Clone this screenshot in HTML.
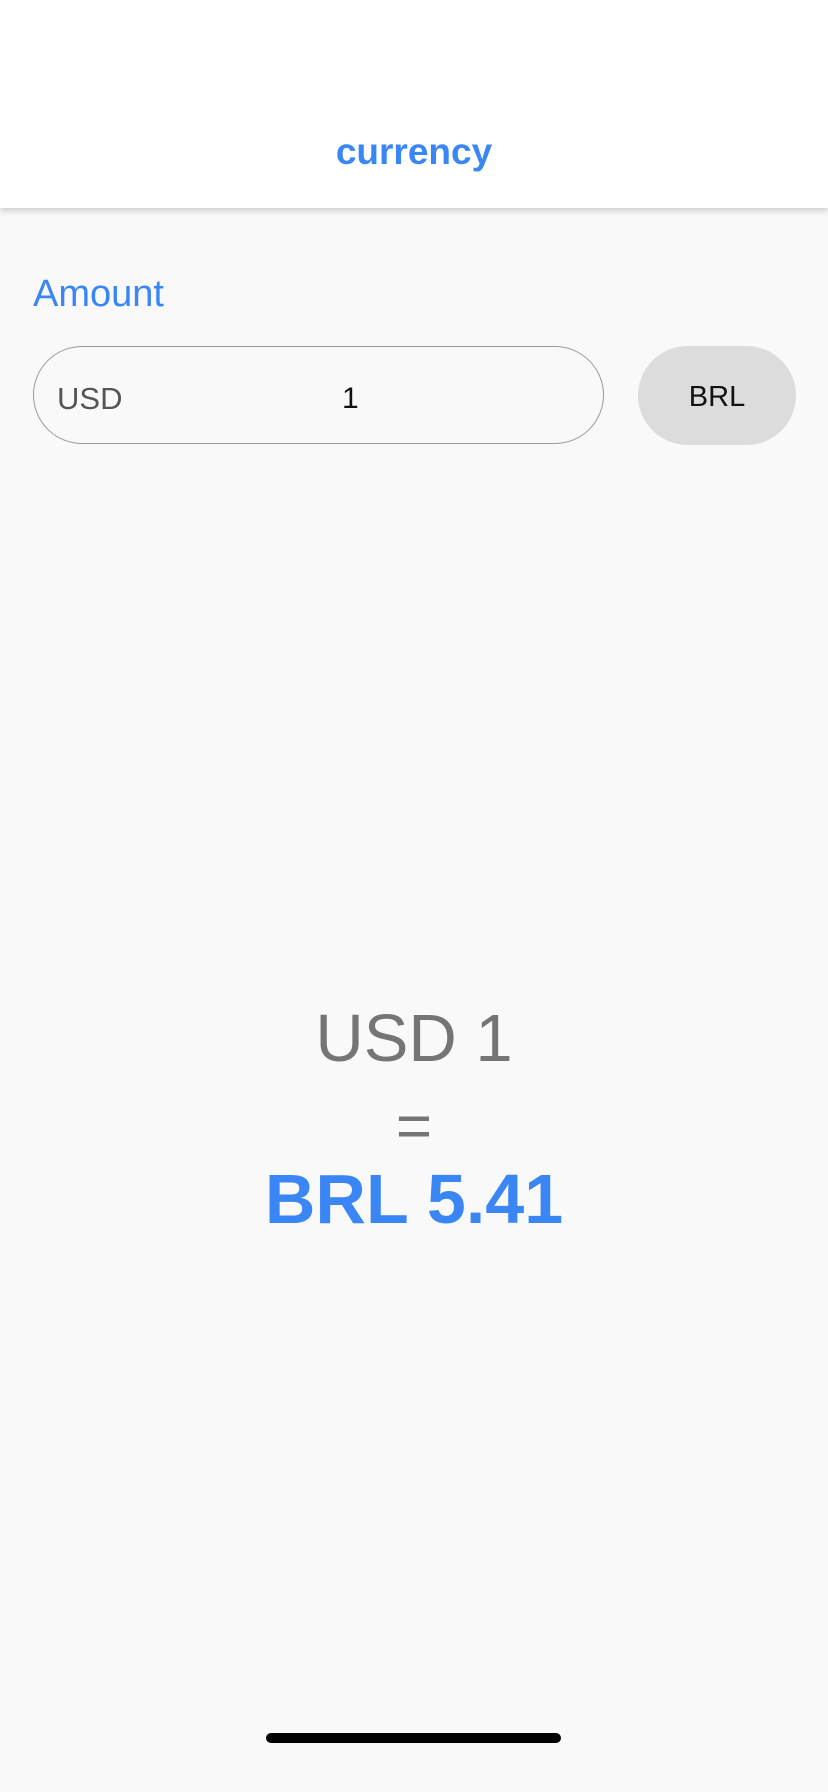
<!DOCTYPE html>
<html><head><meta charset="utf-8"><style>
html,body{margin:0;padding:0;}
body{width:828px;height:1792px;background:#f9f9f9;position:relative;overflow:hidden;font-family:"Liberation Sans",sans-serif;}
.hdr{position:absolute;left:0;top:0;width:828px;height:208px;background:#fff;box-shadow:0 3px 6px rgba(0,0,0,0.18);}
.t{position:absolute;left:0;width:828px;text-align:center;white-space:nowrap;}
.abs{position:absolute;white-space:nowrap;}
</style></head><body>
<div class="hdr"></div>
<div class="t" style="top:130px;font-size:37px;font-weight:bold;color:#3a86f5;line-height:44px;">currency</div>
<div class="abs" style="left:33px;top:271px;font-size:38px;color:#3a86f5;line-height:46px;">Amount</div>
<div class="abs" style="left:33px;top:346px;width:569px;height:96px;border:1.5px solid #9a9a9a;border-radius:50px;"></div>
<div class="abs" style="left:57px;top:380px;font-size:31px;color:#555;line-height:38px;">USD</div>
<div class="abs" style="left:342px;top:380px;font-size:30px;color:#111;line-height:38px;">1</div>
<div class="abs" style="left:638px;top:346px;width:158px;height:99px;background:#dcdcdc;border-radius:50px;"></div>
<div class="abs" style="left:638px;top:379px;width:158px;text-align:center;font-size:29px;color:#111;line-height:36px;">BRL</div>
<div class="t" style="top:997px;font-size:67px;color:#757575;line-height:84px;">USD 1</div>
<div class="t" style="top:1092px;font-size:62px;color:#757575;line-height:70px;">=</div>
<div class="t" style="top:1157px;font-size:70px;font-weight:bold;color:#3a86f5;line-height:84px;">BRL 5.41</div>
<div class="abs" style="left:266px;top:1733px;width:295px;height:10px;background:#000;border-radius:5px;"></div>
</body></html>
